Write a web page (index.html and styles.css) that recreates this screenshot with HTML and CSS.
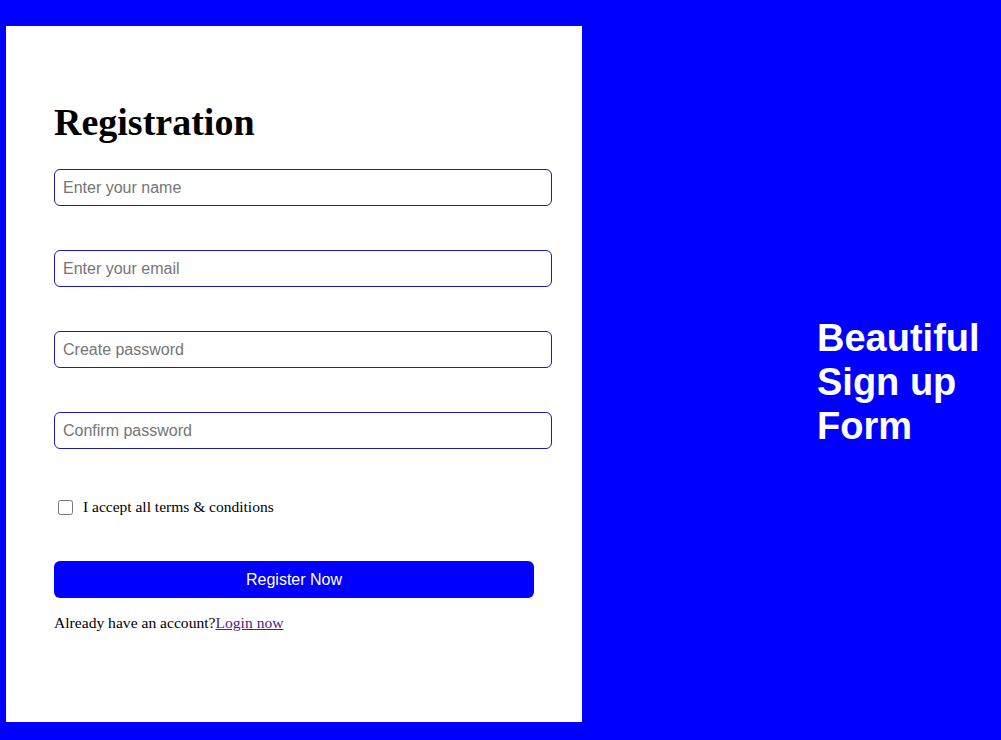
FILE: index.html
```html
<!DOCTYPE html>
<html lang="en">
<head>
<meta charset="utf-8">
<title>Registration</title>
<link rel="stylesheet" href="styles.css">
</head>
<body>
<div class="page">
  <div class="panel">
    <h2 class="title">Registration</h2>
    <form class="form">
      <input class="field" type="text" placeholder="Enter your name">
      <input class="field" type="email" placeholder="Enter your email">
      <input class="field" type="password" placeholder="Create password">
      <input class="field" type="password" placeholder="Confirm password">
      <label class="terms"><input class="check" type="checkbox"><span>I accept all terms &amp; conditions</span></label>
      <button class="submit" type="button">Register Now</button>
      <p class="login">Already have an account?<a class="login-link" href="#">Login now</a></p>
    </form>
  </div>
  <div class="side">
    <h1 class="side-text">Beautiful Sign up Form</h1>
  </div>
</div>
</body>
</html>
```

FILE: styles.css
```css
html, body {
  margin: 0;
  padding: 0;
  background: #0000ff;
  height: 100%;
}
.page {
  display: flex;
  padding: 26px 0 18px 6px;
  box-sizing: border-box;
  height: 740px;
}
.panel {
  width: 576px;
  background: #ffffff;
  padding: 74px 48px 0 48px;
  box-sizing: border-box;
}
.title {
  font-family: "Liberation Serif", "Times New Roman", serif;
  font-weight: bold;
  font-size: 38px;
  margin: 0 0 25px 0;
  color: #000;
}
.form {
  display: flex;
  flex-direction: column;
  align-items: flex-start;
}
.field {
  width: 498px;
  height: 37px;
  box-sizing: border-box;
  border: 1px solid #1c1ca8;
  border-radius: 6px;
  padding: 0 8px;
  margin: 0 0 44px 0;
  font-family: "Liberation Sans", Arial, sans-serif;
  font-size: 16px;
  color: #000;
  outline: none;
}
.field::placeholder {
  color: #757575;
}
.terms {
  display: flex;
  align-items: center;
  font-family: "Liberation Serif", "Times New Roman", serif;
  font-size: 15.5px;
  margin: 5px 0 0 4px;
}
.check {
  width: 15px;
  height: 15px;
  margin: 0 10px 0 0;
}
.submit {
  margin-top: 45px;
  width: 480px;
  height: 37px;
  background: #0000ff;
  color: #fff;
  border: none;
  border-radius: 6px;
  font-family: "Liberation Sans", Arial, sans-serif;
  font-size: 16px;
}
.login {
  margin: 16px 0 0 0;
  font-family: "Liberation Serif", "Times New Roman", serif;
  font-size: 15.6px;
}
.login-link {
  color: #551a8b;
}
.side {
  flex: 1;
  display: flex;
  align-items: center;
  padding: 16px 0 0 235px;
}
.side-text {
  margin: 0;
  width: 170px;
  color: #fff;
  font-family: "Liberation Sans", Arial, sans-serif;
  font-weight: bold;
  font-size: 38px;
  line-height: 44px;
}
```
